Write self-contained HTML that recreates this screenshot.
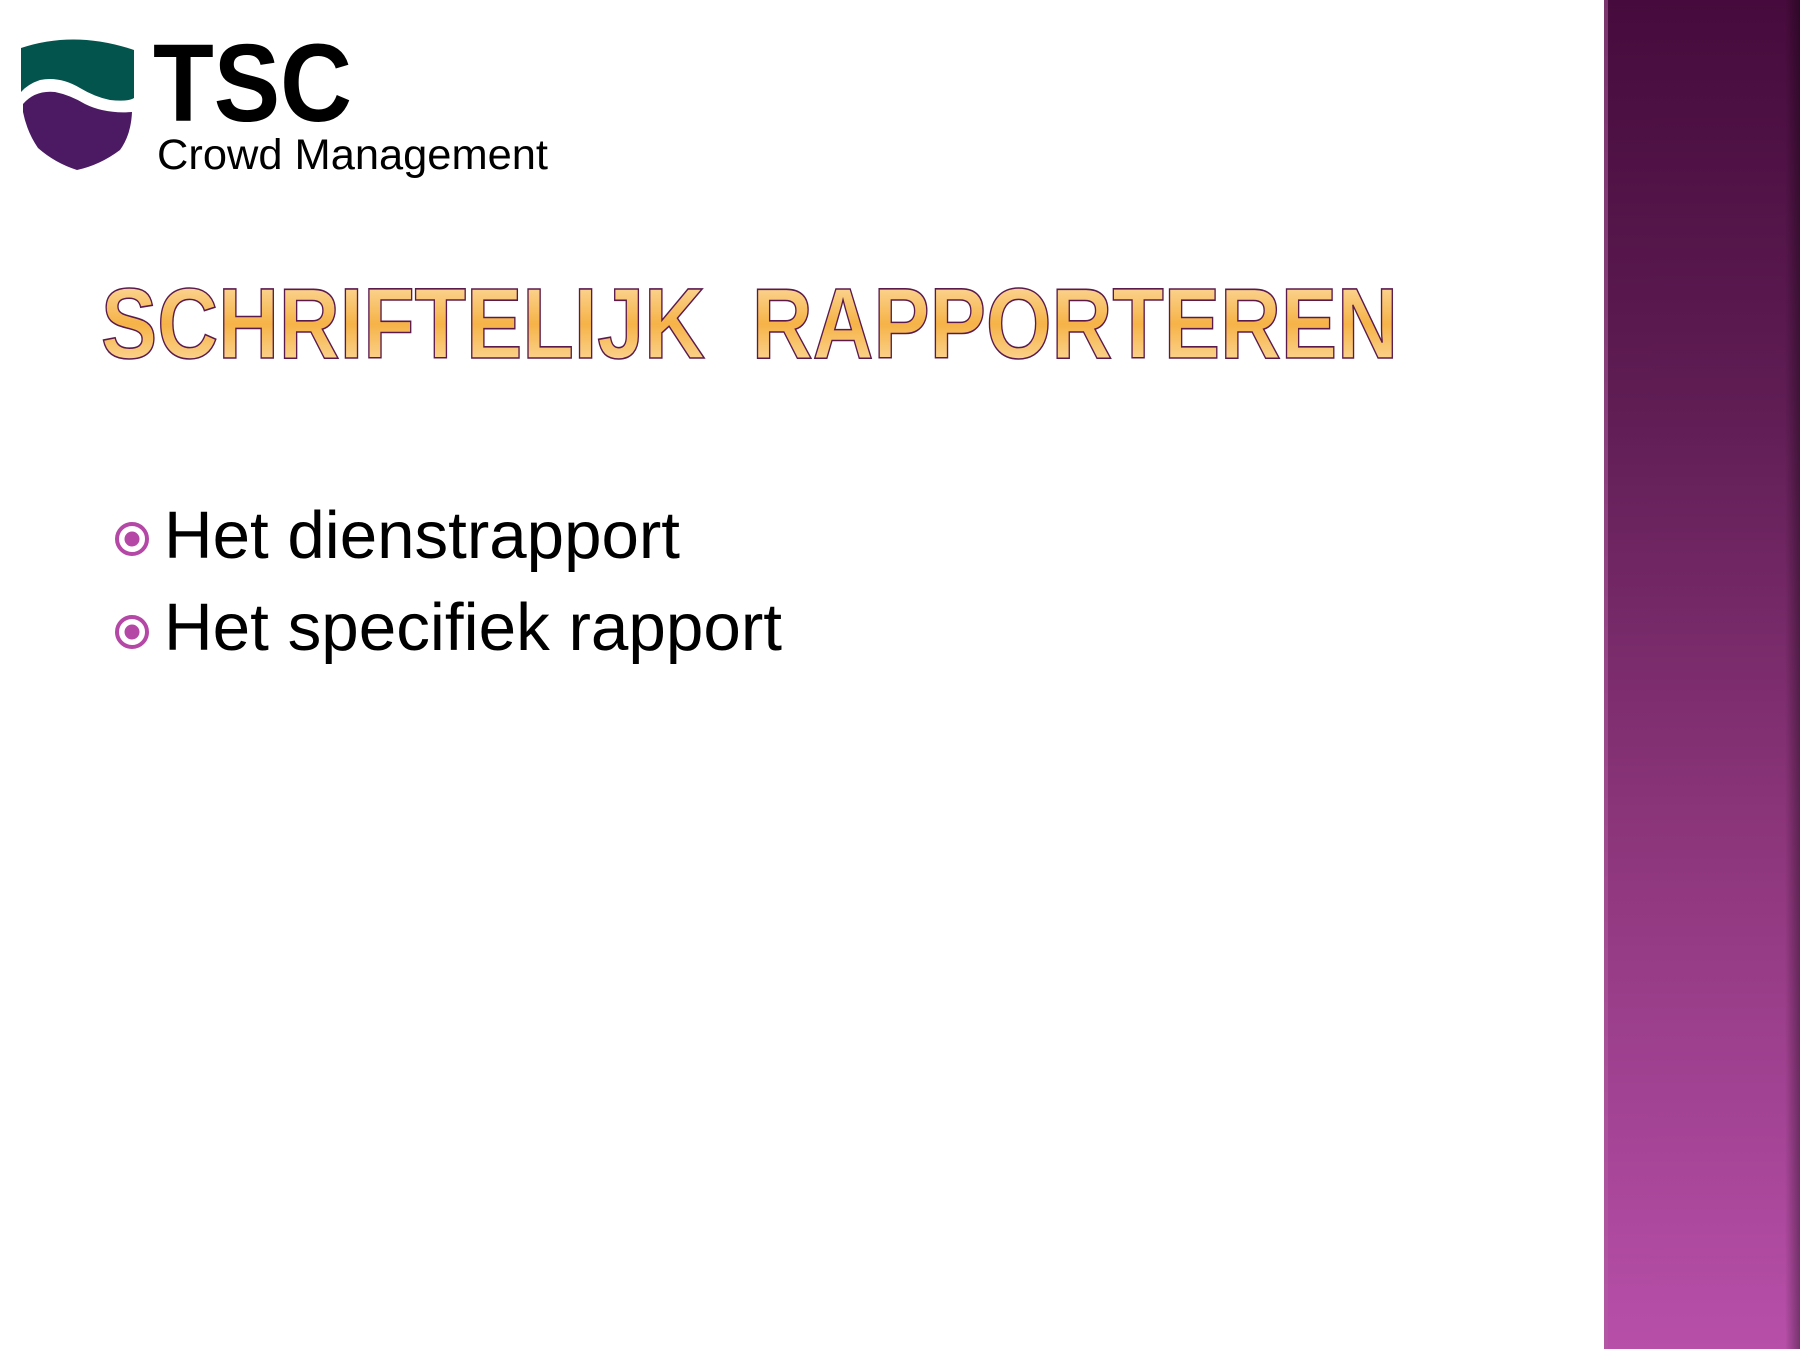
<!DOCTYPE html>
<html><head><meta charset="utf-8"><style>
html,body{margin:0;padding:0;background:#fff;}
body{width:1800px;height:1349px;overflow:hidden;position:relative;}
svg{position:absolute;left:0;top:0;}
</style></head><body>
<svg width="1800" height="1349" viewBox="0 0 1800 1349" xmlns="http://www.w3.org/2000/svg">
<defs>
<linearGradient id="bar" x1="0" y1="0" x2="0" y2="1">
<stop offset="0" stop-color="#460b3c"/>
<stop offset="0.3" stop-color="#5f1d54"/>
<stop offset="0.6" stop-color="#8a3479"/>
<stop offset="1" stop-color="#b74fa9"/>
</linearGradient>
<linearGradient id="edge" x1="0" y1="0" x2="1" y2="0">
<stop offset="0" stop-color="#000" stop-opacity="0"/>
<stop offset="1" stop-color="#000" stop-opacity="0.35"/>
</linearGradient>
<linearGradient id="tg" x1="0" y1="0" x2="0" y2="1">
<stop offset="0" stop-color="#fde3b4"/>
<stop offset="0.5" stop-color="#f6b347"/>
<stop offset="1" stop-color="#fde3b4"/>
</linearGradient>
</defs>
<rect x="1604" y="0" width="196" height="1349" fill="url(#bar)"/>
<rect x="1604" y="0" width="4" height="1349" fill="#b060a0" opacity="0.5"/>
<rect x="1785" y="0" width="15" height="1349" fill="url(#edge)"/>
<path d="M21 48 Q75 30 134 50 L134 98 Q128 102 110 100 Q95 97 80 88 Q60 76 40 80 Q28 84 21 92 Z" fill="#04544e"/>
<path d="M23 104 Q35 90 55 92 Q70 95 85 104 Q105 114 132 112 Q131 135 120 150 Q100 165 77 170 Q55 163 38 148 Q27 132 23 112 Z" fill="#4c1a63"/>
<text x="153" y="121" font-family="Liberation Sans, sans-serif" font-weight="bold" font-size="110" textLength="199" lengthAdjust="spacingAndGlyphs" fill="#000">TSC</text>
<text x="157" y="169" font-family="Liberation Sans, sans-serif" font-size="43" textLength="391" lengthAdjust="spacingAndGlyphs" fill="#000">Crowd Management</text>
<text x="101" y="358" font-family="Liberation Sans, sans-serif" font-weight="bold" font-size="100" textLength="1297" lengthAdjust="spacingAndGlyphs" fill="url(#tg)" stroke="#5a1a4e" stroke-width="1.6" xml:space="preserve">SCHRIFTELIJK  RAPPORTEREN</text>
<circle cx="132" cy="539" r="15" fill="none" stroke="#b548a6" stroke-width="4"/>
<circle cx="132" cy="539" r="7.5" fill="#b548a6"/>
<circle cx="132" cy="632" r="15" fill="none" stroke="#b548a6" stroke-width="4"/>
<circle cx="132" cy="632" r="7.5" fill="#b548a6"/>
<text x="164" y="558" font-family="Liberation Sans, sans-serif" font-size="67" textLength="516" lengthAdjust="spacingAndGlyphs" fill="#000">Het dienstrapport</text>
<text x="164" y="650" font-family="Liberation Sans, sans-serif" font-size="67" textLength="618" lengthAdjust="spacingAndGlyphs" fill="#000">Het specifiek rapport</text>
</svg>
</body></html>
